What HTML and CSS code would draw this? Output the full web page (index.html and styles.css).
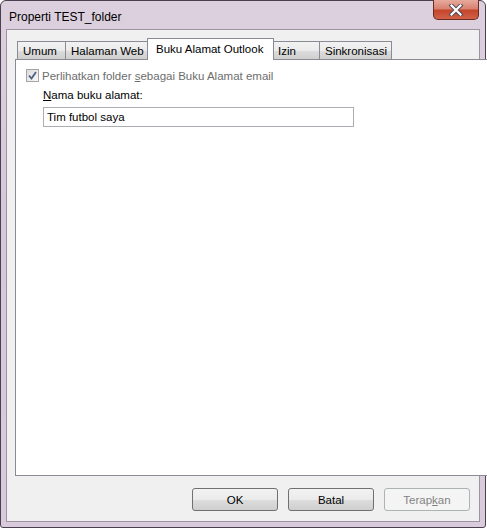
FILE: index.html
```html
<!DOCTYPE html>
<html lang="id">
<head>
    <meta charset="UTF-8">
    <title>Properti TEST_folder</title>
    <link rel="stylesheet" href="styles.css">
</head>
<body>

    <div class="window">
        <div class="title-bar">
            <span class="title">Properti TEST_folder</span>
            <button class="close-btn" aria-label="Tutup">
                <svg width="16" height="12" viewBox="0 0 16 12">
                    <path d="M3.5 1.5 L12.5 10.5 M12.5 1.5 L3.5 10.5" stroke="#4a4656" stroke-width="4" stroke-linecap="square"/>
                    <path d="M3.5 1.5 L12.5 10.5 M12.5 1.5 L3.5 10.5" stroke="#ffffff" stroke-width="2.2" stroke-linecap="square"/>
                </svg>
            </button>
        </div>

        <div class="client">
            <div class="tabs">
                <div class="tab tab-umum">Umum</div>
                <div class="tab tab-web">Halaman Web</div>
                <div class="tab tab-buku active">Buku Alamat Outlook</div>
                <div class="tab tab-izin">Izin</div>
                <div class="tab tab-sinkron">Sinkronisasi</div>
            </div>

            <div class="tab-panel">
                <label class="check-row">
                    <span class="checkbox">
                        <svg width="9" height="9" viewBox="0 0 9 9">
                            <path d="M1 4.5 L3.5 7.5 L8 1" fill="none" stroke="#4d6185" stroke-width="1.8"/>
                        </svg>
                    </span>
                    <span>Perlihatkan folder <u>s</u>ebagai Buku Alamat email</span>
                </label>

                <div class="field">
                    <label for="book-name"><u>N</u>ama buku alamat:</label>
                    <input type="text" id="book-name" value="Tim futbol saya">
                </div>
            </div>

            <div class="button-row">
                <button class="btn">OK</button>
                <button class="btn">Batal</button>
                <button class="btn" disabled>Terap<u>k</u>an</button>
            </div>
        </div>
    </div>

</body>
</html>
```

FILE: styles.css
```css
body {
    margin: 0;
    background-color: #ffffff;
    font-family: "Liberation Sans", Arial, sans-serif;
    font-size: 11.5px;
    color: #000000;
}
.window {
    width: 486px;
    height: 528px;
    box-sizing: border-box;
    border: 1px solid #4a4050;
    border-radius: 6px 6px 3px 3px;
    background: linear-gradient(180deg, #ddd0de 0%, #d6c8d8 40%, #d9cbdb 100%);
    padding: 0 5px 5px 5px;
    display: flex;
    flex-direction: column;
}
.title-bar {
    height: 28px;
    display: flex;
    justify-content: space-between;
    align-items: flex-start;
}
.title {
    margin-top: 9px;
    margin-left: 3px;
    font-size: 12px;
    color: #000000;
}
.close-btn {
    width: 46px;
    height: 20px;
    margin-top: -1px;
    margin-right: 1px;
    border: 1px solid #6b2a22;
    border-top: none;
    border-radius: 0 0 5px 5px;
    background: linear-gradient(180deg, #e6aa9c 0%, #d98270 45%, #c4452c 55%, #cf6248 100%);
    display: flex;
    align-items: center;
    justify-content: center;
    padding: 0;
}
.client {
    flex: 1;
    border: 1px solid #9d93a2;
    background-color: #f0f0f0;
    padding: 8px 9px 10px 8px;
    display: flex;
    flex-direction: column;
}
.tabs {
    display: flex;
    align-items: flex-end;
    padding-left: 2px;
    height: 21px;
}
.tab {
    height: 18px;
    box-sizing: border-box;
    border: 1px solid #898c95;
    border-bottom: none;
    background: linear-gradient(180deg, #f2f2f2 0%, #ebebeb 50%, #dddddd 51%, #cfcfcf 100%);
    padding: 2px 0 0 5px;
    margin-left: -1px;
    line-height: 14px;
    white-space: nowrap;
}
.tab-umum { width: 49px; margin-left: 0; }
.tab-web { width: 85px; }
.tab-buku { width: 127px; }
.tab-izin { width: 48px; margin-left: 0; }
.tab-sinkron { width: 73px; }
.tab.active {
    height: 22px;
    margin: 0 -2px -1px -3px;
    background: #ffffff;
    position: relative;
    z-index: 1;
    padding: 3px 0 0 8px;
}
.tab-panel {
    flex: 1;
    width: 452px;
    background-color: #ffffff;
    border: 1px solid #898c95;
    padding: 9px 10px;
}
.check-row {
    display: flex;
    align-items: center;
    gap: 3px;
    color: #6d6d6d;
    height: 13px;
}
.checkbox {
    width: 11px;
    height: 11px;
    border: 1px solid #a5a5a5;
    background: linear-gradient(135deg, #dcdcdc, #f8f8f8);
    display: flex;
    align-items: center;
    justify-content: center;
}
.field {
    margin-top: 6px;
    margin-left: 17px;
}
.field label {
    display: block;
    height: 15px;
    line-height: 14px;
}
.field input {
    margin-top: 4px;
    width: 311px;
    height: 20px;
    box-sizing: border-box;
    border: 1px solid #abadb3;
    padding: 0 3px;
    font-family: inherit;
    font-size: 11.5px;
    color: #000000;
    outline: none;
}
.button-row {
    display: flex;
    justify-content: flex-end;
    gap: 10px;
    margin-top: 12px;
}
.btn {
    width: 86px;
    height: 23px;
    border: 1px solid #707070;
    border-radius: 3px;
    background: linear-gradient(180deg, #f2f2f2 0%, #ebebeb 50%, #dddddd 51%, #cfcfcf 100%);
    font-family: inherit;
    font-size: 11.5px;
    color: #000000;
    padding: 0;
}
.btn:disabled {
    border-color: #adb2b5;
    background: #f4f4f4;
    color: #838383;
}
```
